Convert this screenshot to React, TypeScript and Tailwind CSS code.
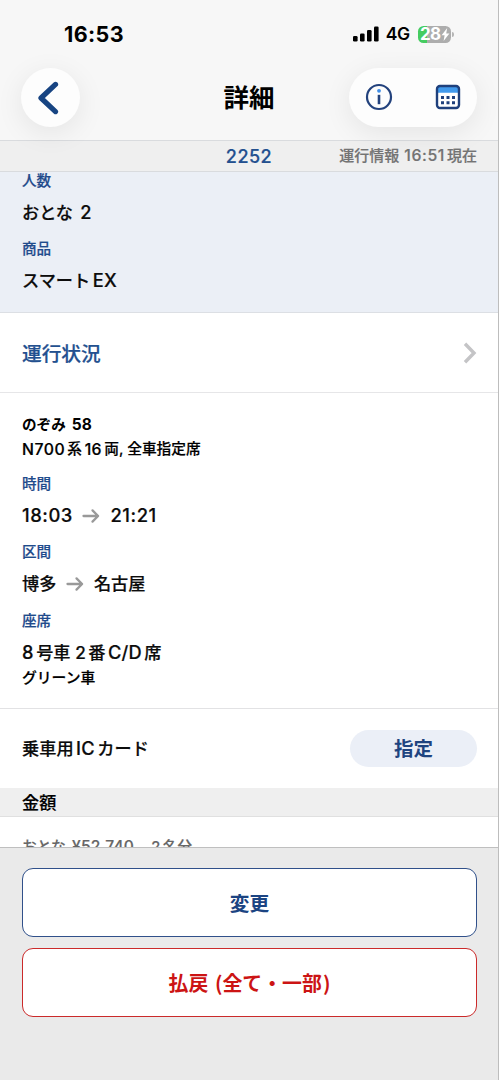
import type { ReactNode } from "react";

const trip = [
  { label: "時間", from: "18:03", to: "21:21" },
  { label: "区間", from: "博多", to: "名古屋" },
];

function Label({ children }: { children: ReactNode }) {
  return <dt className="h-7 text-[14.6px] leading-7 font-medium text-[#1f4b8c]">{children}</dt>;
}

function Value({ children }: { children: ReactNode }) {
  return (
    <dd className="mb-[5.3px] flex h-[35px] items-center text-[17.2px] font-medium text-[#0c0c0c]">
      {children}
    </dd>
  );
}

// Japanese and latin runs, set with a thin gap between them.
// Latin digits and letters are drawn a touch larger than the kana around them.
function Runs({ parts }: { parts: string[] }) {
  return (
    <span className="flex items-baseline gap-[2.5px]">
      {parts.map((p, i) => (
        <span key={i} className={/^[\x20-\x7e¥]+$/.test(p) ? "text-[1.06em] leading-none tracking-[0.2px] whitespace-pre" : "leading-none whitespace-pre"}>
          {p}
        </span>
      ))}
    </span>
  );
}

function Stop({ name }: { name: string }) {
  if (!name.includes(":")) return <span>{name}</span>;
  return <span className="text-[18.4px] tracking-[0.55px]">{name}</span>;
}

function Arrow() {
  return (
    <svg viewBox="0 0 18 16" className="mr-[10px] ml-[9.5px] h-4 w-[18px] text-[#999]" fill="none" stroke="currentColor" strokeWidth="2.3" strokeLinecap="round" strokeLinejoin="round">
      <path d="M1.5 8h14.5M10.5 2.4l5.6 5.6-5.6 5.6" />
    </svg>
  );
}

function StatusBar() {
  return (
    <div className="flex h-[68px] items-center justify-between pr-[43px] pl-[64px]">
      <span className="pt-px text-[21.5px] font-bold tracking-[0.4px]">16:53</span>
      <div className="flex items-center">
        <svg viewBox="0 0 26 16" className="h-4 w-[26px]" fill="#000">
          <rect x="0" y="10" width="4.6" height="5.6" rx="1.3" />
          <rect x="7" y="7.4" width="4.6" height="8.2" rx="1.3" />
          <rect x="14" y="4" width="4.6" height="11.6" rx="1.3" />
          <rect x="21" y="0.4" width="4.6" height="15.2" rx="1.3" />
        </svg>
        <span className="ml-[7px] pt-px text-[17.5px] font-semibold tracking-[-0.2px]">4G</span>
        <div className="ml-[8px] flex h-[17px] w-[33px] items-center rounded-[5.5px] bg-linear-to-r from-[#45cc60] from-28% to-[#adadad] to-28% pl-[2px] text-white">
          <span className="text-[17px] leading-none font-bold tracking-[-0.6px]">28</span>
          <svg viewBox="0 0 9 13" className="h-[13px] w-[9px]" fill="currentColor">
            <path d="M6.2 0 0.6 7.2h3L2.6 13l5.8-7.4H5.2z" />
          </svg>
        </div>
        <span className="mr-px ml-[1px] h-[5px] w-[2px] rounded-r-full bg-[#b5b5b5]" />
      </div>
    </div>
  );
}

function NavBar() {
  return (
    <div className="grid h-[58px] grid-cols-[128px_1fr_128px] items-center px-[21px]">
      <button className="flex size-[59px] items-center justify-center rounded-full bg-[#fdfdfd] shadow-[0_6px_28px_rgba(0,0,0,0.08)]">
        <svg viewBox="0 0 22 34" className="-ml-[5px] h-[34px] w-[22px]" fill="none" stroke="#174482" strokeWidth="5.2" strokeLinecap="round" strokeLinejoin="round">
          <path d="M18.5 3.4 4 17l14.5 13.6" />
        </svg>
      </button>
      <h1 className="pt-px text-center text-[25.5px] leading-none font-bold">詳細</h1>
      <div className="flex h-[59px] items-center justify-between rounded-full bg-[#fdfdfd] px-4 pb-px shadow-[0_6px_28px_rgba(0,0,0,0.08)]">
        <svg viewBox="0 0 28 28" className="size-7" fill="none">
          <circle cx="14" cy="14" r="12" stroke="#23427d" strokeWidth="2.2" />
          <path d="M14 11.8v9.4" stroke="#23427d" strokeWidth="2.6" />
          <circle cx="14" cy="7.8" r="1.9" fill="#3f8de6" />
        </svg>
        <svg viewBox="0 0 26 26" className="size-[26px]" fill="none">
          <rect x="2" y="2" width="22" height="22" rx="3" fill="#fff" />
          <path d="M2 8.8V5a3 3 0 0 1 3-3h16a3 3 0 0 1 3 3v3.8z" fill="#429aec" />
          <rect x="2" y="2" width="22" height="22" rx="3" stroke="#1f407c" strokeWidth="2.4" />
          <path d="M6 13.4h14M6 18.8h14" stroke="#1f407c" strokeWidth="3" strokeDasharray="3 2.5" />
        </svg>
      </div>
    </div>
  );
}

export default function App() {
  return (
    <div className="flex h-[1080px] w-[499px] flex-col overflow-hidden border-r border-[#bdbdbd] bg-white font-['Inter','Noto_Sans_CJK_JP',sans-serif] text-black">
      {/* the nav buttons' shadows fall over the info strip */}
      <div className="shrink-0 bg-[#efefef]">
        <header className="h-[140px] bg-[#f7f7f7]">
          <StatusBar />
          <NavBar />
        </header>
        <div className="grid h-8 grid-cols-[1fr_auto_1fr] items-center border-y border-[#d9dbde] px-[21px]">
          <span className="col-start-2 text-[18px] font-medium tracking-[0.5px] text-[#23508f] [-webkit-text-stroke:0.2px]">2252</span>
          <span className="flex items-baseline justify-end gap-[5px] text-[15px] leading-none font-medium text-[#737373] [-webkit-text-stroke:0.2px]">
            <span>運行情報</span>
            <span className="flex items-baseline gap-[2px]">
              <span className="text-[15.8px] tracking-[0.6px]">16:51</span>
              <span>現在</span>
            </span>
          </span>
        </div>
      </div>

      <main className="flex min-h-0 flex-1 flex-col overflow-hidden [-webkit-text-stroke:0.2px]">
        <dl className="h-[141px] shrink-0 overflow-hidden border-b border-[#dcdfe4] bg-[#ebeff6] px-[22px]">
          <div className="-mt-[5.4px]">
            <Label>人数</Label>
            <Value><Runs parts={["おとな ", "2"]} /></Value>
            <Label>商品</Label>
            <Value><Runs parts={["スマート", "EX"]} /></Value>
          </div>
        </dl>

        <div className="flex h-20 shrink-0 items-center justify-between border-b border-[#e6e6e8] pr-[21px] pl-[22px]">
          <span className="pt-1 text-[19.7px] font-medium text-[#23508f]">運行状況</span>
          <svg viewBox="0 0 14 22" className="h-[22px] w-[14px]" fill="none" stroke="#c4c4c6" strokeWidth="3.4">
            <path d="m2 1.8 9 9.2-9 9.2" />
          </svg>
        </div>

        <section className="h-[316px] shrink-0 border-b border-[#e2e2e4] px-[22px] pt-[19px]">
          <h2 className="flex h-[25px] items-center text-[14.6px] font-bold [-webkit-text-stroke:0]">
            <Runs parts={["のぞみ ", "58"]} />
          </h2>
          <div className="mb-[8px] flex h-[25px] items-center text-[14.7px] font-medium">
            <span className="text-[15.8px] leading-none tracking-[0.5px]">N700</span>
            <span className="ml-[2px] leading-none">系</span>
            <span className="ml-[3px] text-[15.8px] leading-none">16</span>
            <span className="ml-[3px] leading-none">両, 全車指定席</span>
          </div>
          <dl>
            {trip.map((t) => (
              <div key={t.label}>
                <Label>{t.label}</Label>
                <Value>
                  <Stop name={t.from} />
                  <Arrow />
                  <Stop name={t.to} />
                </Value>
              </div>
            ))}
            <Label>座席</Label>
            <Value><Runs parts={["8", "号車 2", "番", "C/D", "席"]} /></Value>
          </dl>
          <p className="-mt-[9px] text-[14.8px] leading-6 font-medium">グリーン車</p>
        </section>

        <div className="flex h-[79px] shrink-0 items-center justify-between pr-[21px] pl-[22px]">
          <span className="text-[17.2px] font-medium text-[#0c0c0c]">
            <Runs parts={["乗車用", "IC", "カード"]} />
          </span>
          <button className="h-[37px] w-[127px] rounded-full bg-[#ebeff7] pt-[3px] text-[19.5px] leading-none font-bold text-[#1f4480] [-webkit-text-stroke:0]">
            指定
          </button>
        </div>
        <h2 className="flex h-[29px] shrink-0 items-center border-b border-[#e0e0e0] bg-[#efefef] px-[22px] pt-[2px] text-[17.2px] font-medium">
          金額
        </h2>
        <p className="flex h-[60px] shrink-0 items-center px-[22px] text-[14.7px] font-medium text-[#666]">
          <Runs parts={["おとな ", "¥52,740", "　2", "名分"]} />
        </p>
      </main>

      <footer className="flex h-[233px] shrink-0 flex-col gap-[11px] border-t border-[#bfbfbf] bg-[#eaeaea] pt-5 pr-[21px] pl-[22px]">
        <button className="h-[69px] rounded-[11px] border-[1.5px] border-[#30508a] bg-white pt-1 text-[19.7px] font-bold text-[#1b4482]">
          変更
        </button>
        <button className="flex h-[69px] items-center justify-center rounded-[11px] border-[1.5px] border-[#cb2a2a] bg-white text-[19.9px] font-bold text-[#cc1414]">
          <span className="font-['Noto_Sans_CJK_JP'] leading-none whitespace-pre">払戻 <span className="ml-[2px]">(</span>全て・一部<span className="ml-[1px]">)</span></span>
        </button>
      </footer>
    </div>
  );
}
